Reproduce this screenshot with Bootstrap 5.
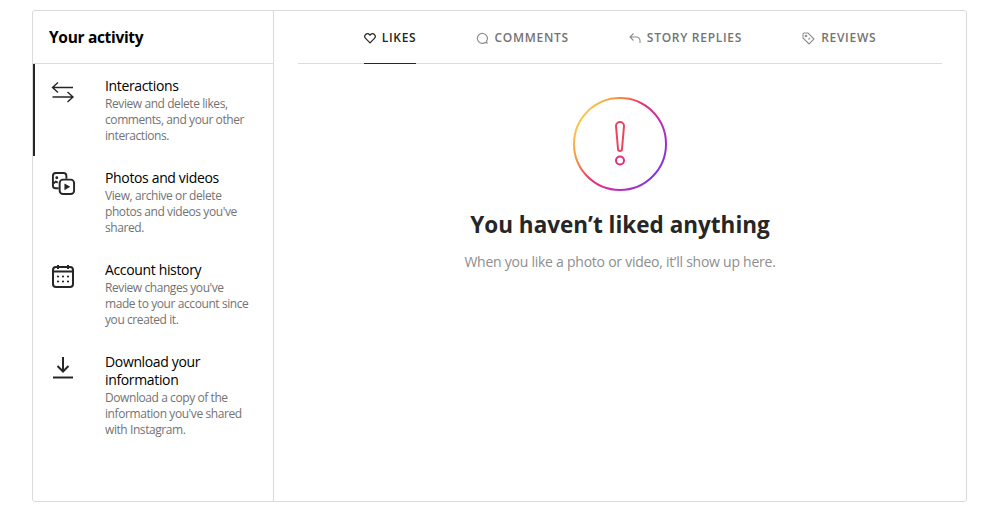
<!DOCTYPE html>
<html lang="en">
<head>
    <meta charset="UTF-8">
    <meta name="viewport" content="width=device-width, initial-scale=1.0">
    <title>Your activity</title>
    <link href="https://cdn.jsdelivr.net/npm/bootstrap@5.3.0/dist/css/bootstrap.min.css" rel="stylesheet">
    <style>
        body {
            font-family: "Open Sans", "Noto Sans", sans-serif;
            background: #fff;
            color: #262626;
            overflow: hidden;
        }
        .activity-shell {
            width: 935px;
            height: 492px;
            margin: 10px 0 0 32px;
            border: 1px solid #dbdbdb;
            border-radius: 3px;
        }
        .activity-side {
            width: 241px;
            border-right: 1px solid #dbdbdb;
        }
        .activity-head {
            height: 53px;
            padding: 2px 0 0 16px;
            border-bottom: 1px solid #dbdbdb;
            font-size: 15.5px;
            font-weight: 700;
            color: #000;
            letter-spacing: -0.32px;
        }
        .side-item {
            padding: 13px 20px 0 16px;
            min-height: 92px;
            border-left: 2px solid transparent;
        }
        .side-item.active-item {
            border-left-color: #262626;
        }
        .side-icon {
            width: 54px;
            flex: 0 0 54px;
            padding-top: 1px;
        }
        .side-title {
            font-size: 14px;
            line-height: 18px;
            margin-bottom: 1px;
            color: #000;
            letter-spacing: -0.35px;
        }
        .side-text {
            font-size: 12px;
            line-height: 16px;
            color: #737373;
            letter-spacing: -0.42px;
        }
        .tab-row {
            height: 53px;
            margin: 0 24px;
            border-bottom: 1px solid #dbdbdb;
            gap: 60px;
        }
        .tab-item {
            height: 53px;
            padding-top: 2px;
            margin-bottom: -1px;
            font-size: 12px;
            font-weight: 600;
            letter-spacing: 0.72px;
            color: #737373;
            gap: 6px;
            border-bottom: 1px solid transparent;
        }
        .tab-item.active-tab {
            color: #262626;
            border-bottom-color: #262626;
        }
        .empty-box {
            padding-top: 32px;
        }
        .empty-title {
            font-size: 22.5px;
            line-height: 28px;
            font-weight: 700;
            color: #262626;
            margin: 19px 0 0;
        }
        .empty-text {
            font-size: 14px;
            line-height: 18px;
            color: #8e8e8e;
            margin: 14px 0 0;
            letter-spacing: -0.25px;
        }
    </style>
</head>
<body>
    <div class="activity-shell d-flex">
        <div class="activity-side flex-shrink-0">
            <div class="activity-head d-flex align-items-center">Your activity</div>

            <div class="side-item active-item d-flex">
                <div class="side-icon">
                    <svg width="24" height="24" viewBox="0 0 24 24" fill="none" stroke="#262626" stroke-width="1.4"><path d="M1.500 7.500H22M7 2.500 1.500 7.500 7 12.500"/><path d="M1.500 17H22M16.500 12 22 17l-5.500 5"/></svg>
                </div>
                <div>
                    <div class="side-title">Interactions</div>
                    <div class="side-text">Review and delete likes, comments, and your other interactions.</div>
                </div>
            </div>

            <div class="side-item d-flex">
                <div class="side-icon">
                    <svg width="25" height="25" viewBox="0 0 26 26" fill="none" stroke="#262626" stroke-width="2"><path d="M8 18H5a3 3 0 0 1-3-3V5a3 3 0 0 1 3-3h8a3 3 0 0 1 3 3v3"/><rect x="9" y="9" width="15" height="15" rx="3.500"/><path d="M14 13l6 3.500-6 3.500z" fill="#262626" stroke="none"/><circle cx="6" cy="7" r="1.500" fill="#262626" stroke="none"/><path d="M2.500 13 5 11l2 1"/></svg>
                </div>
                <div>
                    <div class="side-title">Photos and videos</div>
                    <div class="side-text">View, archive or delete photos and videos you've shared.</div>
                </div>
            </div>

            <div class="side-item d-flex">
                <div class="side-icon">
                    <svg width="24" height="24" viewBox="0 0 24 24" fill="none" stroke="#262626" stroke-width="2"><rect x="2" y="3" width="20" height="20" rx="3"/><path d="M2 7.500H22M7 1v4M17 1v4"/><g fill="#262626" stroke="none"><circle cx="7" cy="12.500" r="1.100"/><circle cx="12" cy="12.500" r="1.100"/><circle cx="17" cy="12.500" r="1.100"/><circle cx="7" cy="17.500" r="1.100"/><circle cx="12" cy="17.500" r="1.100"/><circle cx="17" cy="17.500" r="1.100"/></g></svg>
                </div>
                <div>
                    <div class="side-title">Account history</div>
                    <div class="side-text">Review changes you've made to your account since you created it.</div>
                </div>
            </div>

            <div class="side-item d-flex">
                <div class="side-icon">
                    <svg width="24" height="24" viewBox="0 0 24 24" fill="none" stroke="#262626" stroke-width="2"><path d="M12 1v14M6.500 10 12 15.500 17.500 10"/><path d="M2 21.500H22"/></svg>
                </div>
                <div>
                    <div class="side-title">Download your information</div>
                    <div class="side-text">Download a copy of the information you've shared with Instagram.</div>
                </div>
            </div>
        </div>

        <div class="flex-grow-1">
            <div class="tab-row d-flex justify-content-center">
                <div class="tab-item active-tab d-flex align-items-center">
                    <svg width="12" height="12" viewBox="0 0 12 12" fill="none" stroke="#262626" stroke-width="1.200"><path d="M6 10.800 1.600 6.300a2.700 2.700 0 0 1 0-3.800 2.700 2.700 0 0 1 3.800 0l.6.700.6-.7a2.700 2.700 0 0 1 3.800 0 2.700 2.700 0 0 1 0 3.800z"/></svg>
                    LIKES
                </div>
                <div class="tab-item d-flex align-items-center">
                    <svg width="12" height="12" viewBox="0 0 12 12" fill="none" stroke="#8e8e8e" stroke-width="1.200"><path d="M10.500 9.200A5 5 0 1 0 9.200 10.500L11 11z"/></svg>
                    COMMENTS
                </div>
                <div class="tab-item d-flex align-items-center">
                    <svg width="12" height="12" viewBox="0 0 12 12" fill="none" stroke="#8e8e8e" stroke-width="1.100"><path d="M4.500 1.500 1 5l3.500 3.500M1 5h6.500A3.500 3.500 0 0 1 11 8.500V11"/></svg>
                    STORY REPLIES
                </div>
                <div class="tab-item d-flex align-items-center">
                    <svg width="13" height="13" viewBox="0 0 13 13" fill="none" stroke="#8e8e8e" stroke-width="1.100"><path d="M1 2.200A1.200 1.200 0 0 1 2.200 1H6l6 6-5 5-6-6z"/><circle cx="4" cy="4" r=".8" fill="#8e8e8e"/><path d="M6.500 7.500 8 6"/></svg>
                    REVIEWS
                </div>
            </div>

            <div class="empty-box text-center">
                <svg width="96" height="96" viewBox="0 0 96 96" fill="none">
                    <defs>
                        <linearGradient id="igGrad" x1="0.05" y1="0.2" x2="0.95" y2="0.8">
                            <stop offset="0" stop-color="#fdd04f"/>
                            <stop offset="0.25" stop-color="#f58a3c"/>
                            <stop offset="0.45" stop-color="#e8326e"/>
                            <stop offset="0.7" stop-color="#c82bb0"/>
                            <stop offset="1" stop-color="#7a35e8"/>
                        </linearGradient>
                    </defs>
                    <circle cx="48" cy="48" r="46" stroke="url(#igGrad)" stroke-width="2"/>
                    <path d="M44 30a4 4 0 0 1 8 0l-2 23a2 2 0 0 1-4 0z" stroke="#ea4560" stroke-width="2"/>
                    <circle cx="48" cy="64.500" r="4" stroke="#e42f7e" stroke-width="2"/>
                </svg>
                <h2 class="empty-title">You haven’t liked anything</h2>
                <p class="empty-text">When you like a photo or video, it’ll show up here.</p>
            </div>
        </div>
    </div>

    <script src="https://cdn.jsdelivr.net/npm/bootstrap@5.3.0/dist/js/bootstrap.bundle.min.js"></script>
</body>
</html>
